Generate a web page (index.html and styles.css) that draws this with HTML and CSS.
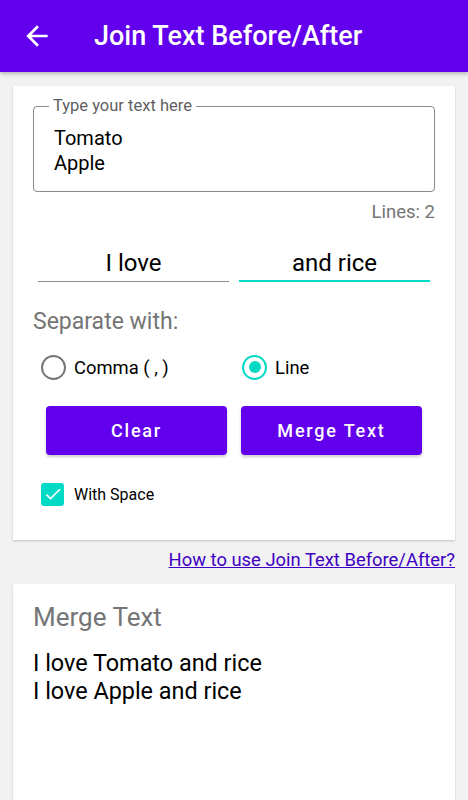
FILE: index.html
```html
<!DOCTYPE html>
<html lang="en">

<head>
    <meta charset="UTF-8" />
    <meta name="viewport" content="width=device-width, initial-scale=1.0" />
    <title>Join Text Before/After</title>
    <link rel="stylesheet" href="styles.css">
</head>

<body>
    <header class="app-bar">
        <svg class="back" viewBox="0 0 24 24" width="32" height="32">
            <path d="M20 11H7.83l5.59-5.59L12 4l-8 8 8 8 1.41-1.41L7.83 13H20v-2z" fill="#fff" />
        </svg>
        <h1>Join Text Before/After</h1>
    </header>

    <main>
        <section class="card">
            <fieldset class="text-field">
                <legend>Type your text here</legend>
                <div class="field-value">Tomato<br>Apple</div>
            </fieldset>
            <div class="line-count">Lines: 2</div>

            <div class="affix-row">
                <div class="affix">I love</div>
                <div class="affix focused">and rice</div>
            </div>

            <div class="section-label">Separate with:</div>
            <div class="radio-row">
                <label class="radio">
                    <span class="circle"></span>
                    <span>Comma ( , )</span>
                </label>
                <label class="radio">
                    <span class="circle checked"></span>
                    <span>Line</span>
                </label>
            </div>

            <div class="button-row">
                <button class="btn">Clear</button>
                <button class="btn">Merge Text</button>
            </div>

            <label class="check">
                <span class="box">
                    <svg viewBox="0 0 24 24" width="20" height="20">
                        <path d="M9 16.17L4.83 12l-1.42 1.41L9 19 21 7l-1.41-1.41z" fill="#fff" />
                    </svg>
                </span>
                <span>With Space</span>
            </label>
        </section>

        <div class="help">
            <a href="#">How to use Join Text Before/After?</a>
        </div>

        <section class="card result">
            <h2>Merge Text</h2>
            <div class="output">I love Tomato and rice<br>I love Apple and rice</div>
        </section>
    </main>
</body>

</html>
```

FILE: styles.css
```css
body {
    font-family: Roboto, 'Noto Sans', sans-serif;
    background-color: #F2F2F2;
    color: #000;
    margin: 0;
}

.app-bar {
    height: 72px;
    background-color: #6200EE;
    display: flex;
    align-items: center;
    padding-left: 21px;
    box-shadow: 0 2px 4px rgba(0, 0, 0, 0.25);
}

.app-bar h1 {
    margin: 0 0 0 41px;
    color: #FFFFFF;
    font-size: 27px;
    font-weight: 500;
}

main {
    padding: 14px 13px 0;
}

.card {
    background-color: #FFFFFF;
    padding: 12px 20px 34px;
    box-shadow: 0 1px 2px rgba(0, 0, 0, 0.2);
}

.text-field {
    margin: 0;
    border: 1px solid #8A8A8A;
    border-radius: 4px;
    padding: 12px 20px 15px;
}

.text-field legend {
    font-size: 16.5px;
    line-height: 16px;
    color: #5F5F5F;
    padding: 0 4px;
    margin-left: -5px;
}

.field-value {
    font-size: 20px;
    line-height: 25px;
}

.line-count {
    text-align: right;
    font-size: 18.5px;
    line-height: 20px;
    color: #757575;
    margin-top: 10px;
}

.affix-row {
    display: grid;
    grid-template-columns: 1fr 1fr;
    gap: 10px;
    margin: 27px 5px 0;
}

.affix {
    text-align: center;
    font-size: 24px;
    line-height: 28px;
    padding-bottom: 4px;
    border-bottom: 1px solid #8E8E8E;
}

.affix.focused {
    padding-bottom: 3px;
    border-bottom: 2px solid #03DAC5;
}

.section-label {
    font-size: 23px;
    line-height: 24px;
    color: #757575;
    margin-top: 28px;
}

.radio-row {
    display: grid;
    grid-template-columns: 1fr 1fr;
    margin-top: 13px;
    height: 40px;
}

.radio,
.check {
    display: flex;
    align-items: center;
    padding-left: 8px;
    font-size: 18.4px;
}

.circle {
    width: 25px;
    height: 25px;
    box-sizing: border-box;
    border: 2.5px solid #757575;
    border-radius: 50%;
    margin-right: 8px;
    display: flex;
    align-items: center;
    justify-content: center;
}

.circle.checked {
    border-color: #03DAC5;
}

.circle.checked::after {
    content: "";
    width: 12px;
    height: 12px;
    border-radius: 50%;
    background-color: #03DAC5;
}

.button-row {
    display: grid;
    grid-template-columns: 1fr 1fr;
    gap: 14px;
    margin: 19px 13px 0;
}

.btn {
    height: 49px;
    border: none;
    border-radius: 4px;
    background-color: #6200EE;
    color: #FFFFFF;
    font-family: Roboto, sans-serif;
    font-size: 18px;
    font-weight: 500;
    letter-spacing: 1.8px;
    box-shadow: 0 2px 3px rgba(0, 0, 0, 0.2);
}

.check {
    margin-top: 27px;
    font-size: 16px;
    height: 24px;
}

.box {
    width: 23px;
    height: 23px;
    border-radius: 3px;
    background-color: #03DAC5;
    margin-right: 10px;
    display: flex;
    align-items: center;
    justify-content: center;
}

.help {
    text-align: right;
    padding: 8px 0 13px;
    font-size: 18.4px;
    line-height: 23px;
}

.help a {
    color: #3F00C4;
}

.result {
    padding: 18px 20px;
    min-height: 240px;
}

.result h2 {
    margin: 0;
    font-size: 26px;
    font-weight: 400;
    line-height: 30px;
    color: #757575;
}

.output {
    margin-top: 17px;
    font-size: 23.4px;
    line-height: 28px;
}
```
